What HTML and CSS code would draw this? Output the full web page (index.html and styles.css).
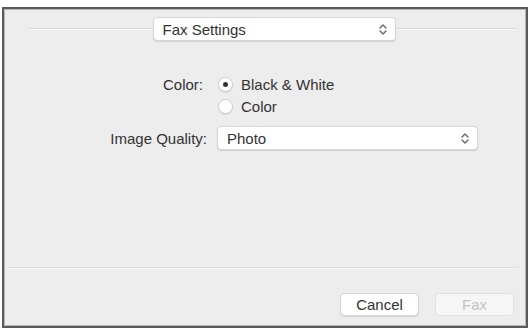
FILE: index.html
```html
<!DOCTYPE html>
<html>
<head>
<meta charset="utf-8">
<link rel="stylesheet" href="styles.css">
</head>
<body>
<div class="frame">
  <div class="top">
    <div class="line"></div>
    <div class="popup popup-top">
      <span>Fax Settings</span>
      <svg class="chev" width="8" height="11" viewBox="0 0 8 11"><path d="M1 4 L4 1 L7 4 M1 7 L4 10 L7 7" fill="none" stroke="#666" stroke-width="1.4" stroke-linecap="round" stroke-linejoin="round"/></svg>
    </div>
    <div class="line"></div>
  </div>
  <div class="form">
    <div class="label label-color">Color:</div>
    <div class="radios">
      <div class="radio-row"><span class="radio on"></span><span>Black &amp; White</span></div>
      <div class="radio-row"><span class="radio"></span><span>Color</span></div>
    </div>
    <div class="label">Image Quality:</div>
    <div class="popup popup-quality">
      <span>Photo</span>
      <svg class="chev" width="8" height="11" viewBox="0 0 8 11"><path d="M1 4 L4 1 L7 4 M1 7 L4 10 L7 7" fill="none" stroke="#666" stroke-width="1.4" stroke-linecap="round" stroke-linejoin="round"/></svg>
    </div>
  </div>
  <div class="spacer"></div>
  <div class="sep"></div>
  <div class="buttons">
    <div class="btn">Cancel</div>
    <div class="btn disabled">Fax</div>
  </div>
</div>
</body>
</html>
```
FILE: styles.css
```css
html, body {
  margin: 0;
  padding: 0;
  background: #ffffff;
}
body {
  font-family: "Liberation Sans", Arial, sans-serif;
  font-size: 15px;
  color: #333333;
}
.frame {
  margin: 7px 3px 0 2px;
  height: 317px;
  border: 2px solid #5a5a5a;
  box-shadow: inset 0 0 0 1px #b8b8b8;
  background: #ededed;
  display: flex;
  flex-direction: column;
}
.top {
  display: flex;
  align-items: center;
  margin-top: 8px;
  padding: 0 8px 0 26px;
}
.line {
  flex: 1;
  height: 1px;
  background: #d9d9d9;
  border-bottom: 1px solid #f6f6f6;
}
.popup {
  box-sizing: border-box;
  height: 24px;
  background: #ffffff;
  border: 1px solid #d6d6d6;
  border-radius: 4px;
  box-shadow: 0 1px 1px rgba(0,0,0,0.12);
  display: flex;
  align-items: center;
  justify-content: space-between;
  padding: 0 8px 0 10px;
}
.popup-top {
  width: 243px;
  padding-left: 9px;
}
.chev {
  display: block;
}
.form {
  display: grid;
  grid-template-columns: 203px 261px;
  column-gap: 10px;
  row-gap: 10px;
  margin-top: 33px;
  align-items: center;
}
.label {
  text-align: right;
}
.label-color {
  align-self: start;
  padding-right: 4px;
  line-height: 20px;
  margin-top: 1px;
}
.radios {
  display: flex;
  flex-direction: column;
  gap: 2px;
}
.radio-row {
  display: flex;
  align-items: center;
  gap: 8px;
  height: 20px;
  margin-left: 1px;
}
.radio {
  box-sizing: border-box;
  width: 15px;
  height: 15px;
  border-radius: 50%;
  background: #ffffff;
  border: 1px solid #cfcfcf;
  box-shadow: 0 1px 1px rgba(0,0,0,0.1);
  display: flex;
  align-items: center;
  justify-content: center;
}
.radio.on::after {
  content: "";
  width: 5px;
  height: 5px;
  border-radius: 50%;
  background: #333333;
}
.popup-quality {
  padding-left: 9px;
}
.spacer {
  flex: 1;
}
.sep {
  height: 1px;
  background: #dcdcdc;
  border-bottom: 1px solid #f7f7f7;
  margin: 0 8px 0 4px;
}
.buttons {
  display: flex;
  justify-content: flex-end;
  gap: 16px;
  padding: 24px 12px 10px 0;
}
.btn {
  box-sizing: border-box;
  width: 79px;
  height: 23px;
  background: #ffffff;
  border: 1px solid #d6d6d6;
  border-radius: 5px;
  box-shadow: 0 1px 1px rgba(0,0,0,0.12);
  display: flex;
  align-items: center;
  justify-content: center;
}
.btn.disabled {
  background: #f6f6f6;
  color: #c4c4c4;
  border-color: #e2e2e2;
  box-shadow: none;
}
```
